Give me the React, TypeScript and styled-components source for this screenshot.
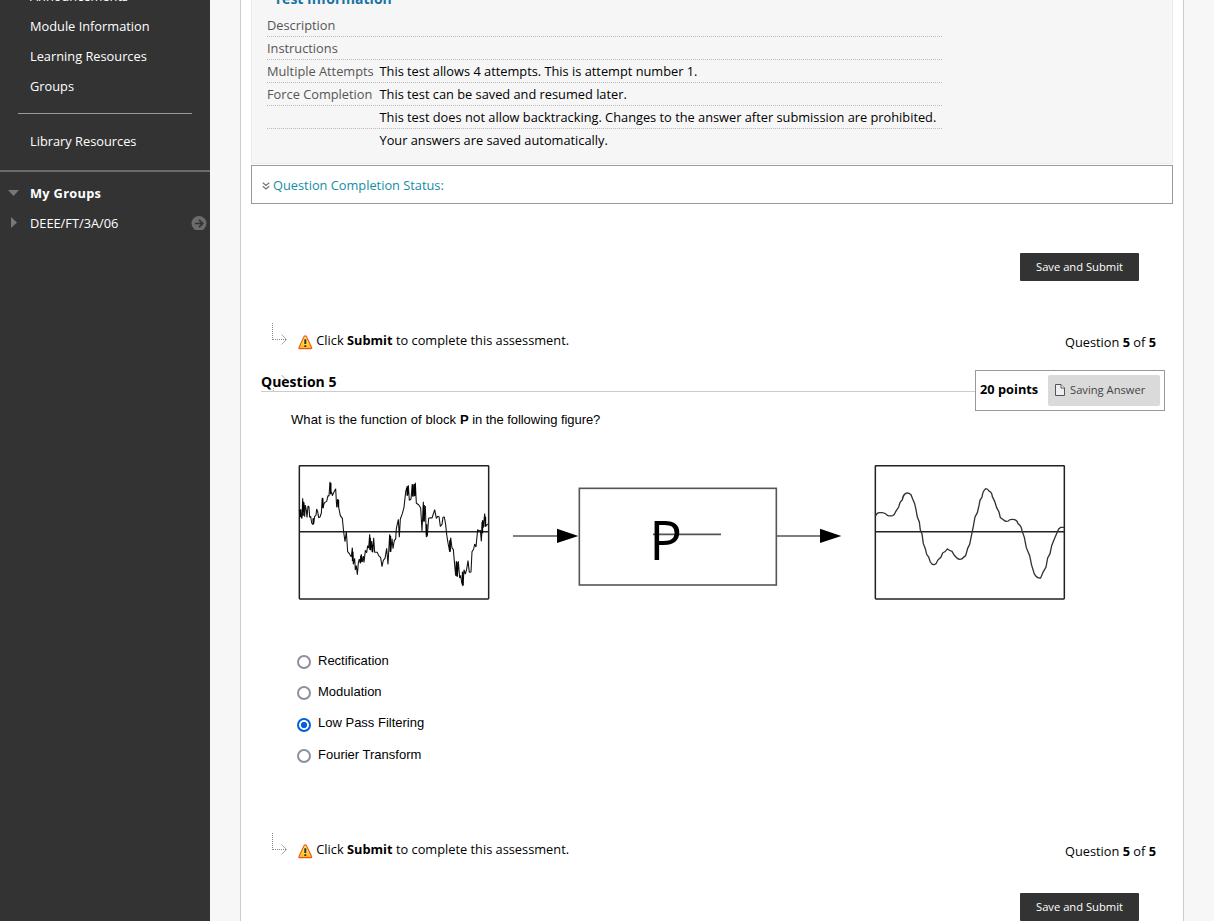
import React from "react";
import styled, { createGlobalStyle } from "styled-components";

const Global = createGlobalStyle`
  * { box-sizing: border-box; }
  html, body { margin: 0; padding: 0; background: #f7f7f7; }
  body { font-family: "Open Sans", sans-serif; font-size: 12.8px; color: #000; overflow: hidden; }
  svg { display: block; flex: none; }
`;

const Page = styled.div`
  display: flex;
  width: 1214px;
  height: 921px;
  overflow: hidden;
  background: #f7f7f7;
`;

const Sidebar = styled.nav`
  width: 210px;
  height: 100%;
  background: #333;
  color: #fff;
  overflow: hidden;
`;

const MenuItem = styled.div<{ $first?: boolean; $bold?: boolean }>`
  display: flex;
  align-items: center;
  height: 30px;
  margin-top: ${(p) => (p.$first ? "-19px" : "0")};
  padding-right: 3px;
  font-weight: ${(p) => (p.$bold ? 700 : 400)};
  letter-spacing: ${(p) => (p.$bold ? "0.3px" : "0")};
`;

const Marker = styled.span`
  display: flex;
  align-items: center;
  width: 30px;
  padding-left: 8px;
`;

const MenuLabel = styled.span`
  flex: 1;
`;

const MenuDivider = styled.hr`
  height: 1px;
  margin: 12px 18px;
  border: 0;
  background: #999;
`;

const MenuSection = styled.div`
  margin-top: 14px;
  padding-top: 6px;
  border-top: 2px solid #6b6b6b;
`;

const Content = styled.main`
  width: 944px;
  height: 100%;
  margin-left: 30px;
  padding: 0 10px;
  border: 1px solid #ccc;
  border-width: 0 1px;
  background: #fff;
  overflow: hidden;
`;

const InfoBox = styled.section`
  display: flex;
  flex-direction: column;
  height: 164px;
  padding: 0 15px;
  border: 1px solid #ebebeb;
  border-top: 0;
  border-radius: 0 0 3px 3px;
  background: #f6f6f6;
`;

const InfoTitle = styled.h3`
  height: 24px;
  margin: -10px 0 0 7px;
  font-size: 14px;
  line-height: 18px;
  color: #1874a4;
`;

const InfoRow = styled.div<{ $last?: boolean }>`
  display: flex;
  width: 675px;
  height: 23px;
  line-height: 22px;
  white-space: nowrap;
  border-bottom: ${(p) => (p.$last ? "0" : "1px dotted #bbb")};
`;

const InfoLabel = styled.span`
  width: 112.5px;
  color: #555;
`;

const StatusBox = styled.section`
  display: flex;
  align-items: center;
  gap: 3px;
  height: 39px;
  margin-top: 1px;
  padding-left: 10px;
  border: 1px solid #999;
  color: #158da3;
`;

const ButtonRow = styled.div<{ $top: number }>`
  display: flex;
  justify-content: flex-end;
  margin-top: ${(p) => p.$top}px;
  padding-right: 34px;
`;

const SubmitButton = styled.button`
  width: 119px;
  height: 28px;
  padding: 0 0 1px;
  border: 0;
  border-radius: 1px;
  background: #333;
  color: #fff;
  font: 11.2px "Open Sans", sans-serif;
`;

const Notice = styled.div<{ $top: number }>`
  display: flex;
  align-items: flex-start;
  height: 24px;
  margin-top: ${(p) => p.$top}px;
  padding: 0 17px 0 21px;
`;

const NoticeBody = styled.div<{ $top: number }>`
  display: flex;
  flex: 1;
  align-items: flex-start;
  margin-top: ${(p) => p.$top}px;
`;

const NoticeIcon = styled.span`
  margin: 4px 3.3px 0 10px;
`;

const NoticeText = styled.span`
  flex: 1;
  line-height: 18px;
`;

const Counter = styled.span`
  margin-top: 2px;
  line-height: 18px;
`;

const QuestionHead = styled.div`
  display: flex;
  height: 41px;
  margin-top: 23px;
  padding: 0 8px 0 10px;
`;

const QuestionTitle = styled.h3`
  position: relative;
  z-index: 0;
  flex: 1;
  height: 22px;
  margin: 0;
  border-bottom: 1px solid #ccc;
  font-size: 14px;
  line-height: 24px;
`;

const TitleMark = styled.svg`
  position: absolute;
  z-index: -1;
  left: 11px;
  top: 5px;
`;

const PointsBox = styled.div`
  display: flex;
  align-items: center;
  justify-content: space-between;
  width: 190px;
  height: 41px;
  padding: 0 4px;
  border: 1px solid #999;
  font-weight: 700;
`;

const Points = styled.span`
  padding-bottom: 4px;
`;

const SavingButton = styled.div`
  display: flex;
  align-items: center;
  gap: 5px;
  width: 112px;
  height: 31px;
  padding: 0 0 1px 7px;
  border-radius: 2px;
  background: #dadada;
  color: #444;
  font-size: 11.2px;
  font-weight: 400;
`;

const SavingLabel = styled.span`
  padding-bottom: 1px;
`;

const Prompt = styled.p`
  height: 18px;
  margin: 0 0 0 40px;
  font: 13px/18px "Liberation Sans", sans-serif;
`;

const PromptPart = styled.span<{ $tracking: number }>`
  letter-spacing: ${(p) => p.$tracking}px;
`;

const Figure = styled.figure`
  height: 155px;
  margin: 26px 0 0 39px;
`;

const Options = styled.div`
  display: flex;
  flex-direction: column;
  margin: 36px 0 0 46px;
`;

const Option = styled.label<{ $selected: boolean }>`
  display: flex;
  align-items: flex-start;
  gap: 7px;
  height: 31.33px;
  font: 13px "Liberation Sans", sans-serif;
  line-height: ${(p) => (p.$selected ? "28px" : "29px")};
`;

const Radio = styled.input`
  appearance: none;
  width: 14px;
  height: 14px;
  margin: 9px 0 0;
  border: 2px solid #8f8f9d;
  border-radius: 50%;
  background: #fff;
  &:checked {
    border-color: #0060df;
    background: radial-gradient(circle, #0060df 0 2.8px, #fff 3.4px);
  }
`;

function Warning() {
  return (
    <svg width="15" height="15" viewBox="0 0 15 15">
      <defs>
        <linearGradient id="warn" x1="0" y1="0" x2="0" y2="1">
          <stop offset="0" stopColor="#ffe97a" />
          <stop offset=".6" stopColor="#ffd83a" />
          <stop offset="1" stopColor="#fdb51c" />
        </linearGradient>
      </defs>
      <path d="M6.2 1.3Q7.3.3 8.3 1.3L13.6 12.4Q14.1 13.6 12.9 13.6H1.6Q.4 13.6 1 12.4Z" fill="url(#warn)" stroke="#f4511e" strokeWidth="1.1" />
      <path d="M7.3 4.3V9M7.3 10.2V12" stroke="#333" strokeWidth="2" />
    </svg>
  );
}

function Branch() {
  return (
    <svg width="16" height="24" viewBox="0 0 16 24" fill="none" stroke="#888">
      <path d="M.5 0V17" strokeDasharray="1 1" />
      <path d="M1 16.5H14" strokeDasharray="1 1" />
      <path d="M9.5 11.5L14.5 16.5L9.5 21.5" stroke="#aaa" />
    </svg>
  );
}

function SubmitNotice({ top, bodyTop }: { top: number; bodyTop: number }) {
  return (
    <Notice $top={top}>
      <Branch />
      <NoticeBody $top={bodyTop}>
        <NoticeIcon>
          <Warning />
        </NoticeIcon>
        <NoticeText>
          Click <b>Submit</b> to complete this assessment.
        </NoticeText>
        <Counter>
          Question <b>5</b> of <b>5</b>
        </Counter>
      </NoticeBody>
    </Notice>
  );
}

const NOISY =
  "28,165 30,185 32,168 34,188 36,190 38,130 40,170 42,142 44,185 46,150 49,166 51,187 54,153 57,156 59,187 62,184 65,204 68,208 71,204 74,184 78,181 80,162 83,170 86,188 90,186 94,174 97,128 99,160 102,146 105,142 110,139 114,122 117,123 120,80 122,112 125,112 127,122 132,111 137,101 140,157 143,132 146,157 151,182 157,190 161,231 165,260 169,230 173,290 178,296 184,306 187,278 190,328 194,310 196,345 199,332 202,359 205,324 208,312 211,325 214,298 217,321 220,303 222,322 226,286 230,293 233,272 236,279 239,238 242,286 245,258 248,292 251,248 254,292 262,292 266,302 272,308 276,335 280,316 285,310 290,280 294,328 299,238 302,291 306,251 309,281 313,256 317,252 319,221 325,193 328,247 331,192 337,176 342,157 347,111 350,99 353,119 355,91 358,136 363,132 367,87 369,125 372,87 374,124 376,83 379,145 386,149 392,159 396,228 400,140 402,197 406,153 409,246 412,242 416,190 421,188 426,189 431,174 434,164 439,190 443,184 447,185 451,214 456,208 459,187 463,186 467,209 470,238 474,264 479,290 482,248 486,279 490,283 493,319 497,362 499,318 502,365 505,319 509,369 512,361 515,382 519,393 522,344 526,357 530,343 534,317 538,352 543,351 546,290 551,282 554,267 558,276 563,224 567,230 571,225 574,259 578,195 580,218 584,176 587,213 593,207";

const PEAKS =
  "M32 163V186M39 140V182M70 190V208M98 130V158M122 84V118M145 134V157M188 290V318M213 302V322M240 248V284M247 270V290M301 242V290M352 94V122M368 90V124M375 88V122M402 150V200M410 208V240M480 256V290M501 322V364M518 350V390M577 200V235M586 185V215";

const SMOOTH =
  "M32 182Q36 173 43 173H52Q62 174 67 181Q74 184 83 182Q88 180 92 170L101 156L105 143L112 134Q113 121 122 115Q130 112 138 119L143 132L149 146L153 164L157 186L163 201L166 225L171 237L175 266L181 281L185 298L191 306L196 321Q201 330 208 329Q215 326 218 316L228 306L233 294Q242 290 247 282Q252 286 261 289L268 301L275 308Q282 315 290 312Q295 307 302 302L308 280L314 268L320 238L325 214L330 186L337 173L342 152L345 136L351 126Q353 108 362 101Q368 101 373 109Q381 112 382 125L389 139L395 158L402 171L406 188L415 194Q422 201 430 198Q434 191 449 194Q457 197 459 206Q469 212 471 227L478 247L484 278L494 302L500 331L508 357L514 365Q521 370 527 369L534 352L543 336L548 309L555 296L560 272L568 252L577 231Q580 220 587 217H598";

function SignalDiagram() {
  return (
    <svg width="785" height="155" viewBox="0 0 785 155" fill="none" stroke="#222">
      <g transform="scale(.33333)" strokeWidth="4.5">
        <rect x="28" y="32" width="568" height="400" rx="2" />
        <path d="M28 230.5H596" />
        <polyline points={NOISY} stroke="#111" strokeWidth="3.2" strokeLinejoin="bevel" />
        <path d={PEAKS} stroke="#000" strokeWidth="5" />
      </g>
      <g transform="translate(210 0) scale(.33333)" strokeWidth="4.8" stroke="#555">
        <rect x="238" y="100" width="591" height="290" />
        <path d="M39 243H175M829 243H965M459 238H663" />
        <path d="M171 221L235 243L171 264ZM960 221L1024 243L960 264Z" fill="#000" stroke="none" />
      </g>
      <text x="359.2" y="105" fill="#000" stroke="none" fontFamily="Open Sans" fontSize="54.6">
        P
      </text>
      <g transform="translate(575 0) scale(.33333)" strokeWidth="4.5">
        <rect x="31" y="32" width="567" height="400" rx="2" />
        <path d="M31 230.5H598" />
        <path d={SMOOTH} strokeWidth="4" stroke="#333" />
      </g>
    </svg>
  );
}

const INFO: [string, string][] = [
  ["Description", ""],
  ["Instructions", ""],
  ["Multiple Attempts", "This test allows 4 attempts. This is attempt number 1."],
  ["Force Completion", "This test can be saved and resumed later."],
  ["", "This test does not allow backtracking. Changes to the answer after submission are prohibited."],
  ["", "Your answers are saved automatically."],
];

const ANSWERS = ["Rectification", "Modulation", "Low Pass Filtering", "Fourier Transform"];
const SELECTED = "Low Pass Filtering";

export default function App() {
  return (
    <Page>
      <Global />
      <Sidebar>
        {["Announcements", "Module Information", "Learning Resources", "Groups"].map((label, i) => (
          <MenuItem key={label} $first={i === 0}>
            <Marker />
            <MenuLabel>{label}</MenuLabel>
          </MenuItem>
        ))}
        <MenuDivider />
        <MenuItem>
          <Marker />
          <MenuLabel>Library Resources</MenuLabel>
        </MenuItem>
        <MenuSection>
          <MenuItem $bold>
            <Marker>
              <svg width="11" height="6" viewBox="0 0 11 6">
                <path d="M0 0H11L5.5 6Z" fill="#777" />
              </svg>
            </Marker>
            <MenuLabel>My Groups</MenuLabel>
          </MenuItem>
          <MenuItem>
            <Marker>
              <svg width="9" height="12" viewBox="0 0 9 12">
                <path d="M3 0L9 5.5L3 11Z" fill="#777" />
              </svg>
            </Marker>
            <MenuLabel>DEEE/FT/3A/06</MenuLabel>
            <svg width="16" height="14" viewBox="0 0 16 14">
              <circle cx="8" cy="7.5" r="7.5" fill="#6b6b6b" />
              <path d="M4 7.5H11.5M8 3.8L11.7 7.5L8 11.2" fill="none" stroke="#333" strokeWidth="1.7" />
            </svg>
          </MenuItem>
        </MenuSection>
      </Sidebar>
      <Content>
        <InfoBox>
          <InfoTitle>Test Information</InfoTitle>
          {INFO.map(([label, value], i) => (
            <InfoRow key={i} $last={i === INFO.length - 1}>
              <InfoLabel>{label}</InfoLabel>
              <span>{value}</span>
            </InfoRow>
          ))}
        </InfoBox>
        <StatusBox>
          <svg width="8" height="10" viewBox="0 0 8 10" fill="none" stroke="#777" strokeWidth="1.2">
            <path d="M.8 2.7L4 5.5L7.2 2.7M.8 6.2L4 9L7.2 6.2" />
          </svg>
          <span>Question Completion Status:</span>
        </StatusBox>
        <ButtonRow $top={49}>
          <SubmitButton>Save and Submit</SubmitButton>
        </ButtonRow>
        <SubmitNotice top={42} bodyTop={8} />
        <QuestionHead>
          <QuestionTitle>
            <TitleMark width="16" height="18" viewBox="0 0 16 18" fill="none" stroke="#aaa">
              <path d="M9.5 0L14.5 5" />
              <path d="M1.5 13V17" strokeDasharray="1 1" />
            </TitleMark>
            Question 5
          </QuestionTitle>
          <PointsBox>
            <Points>20 points</Points>
            <SavingButton>
              <svg width="10" height="12" viewBox="0 0 10 12">
                <path d="M.5 .5H6L9.5 4V11.5H.5Z" fill="#eee" stroke="#555" />
                <path d="M6 .5V4H9.5" fill="#fff" stroke="#555" />
              </svg>
              <SavingLabel>Saving Answer</SavingLabel>
            </SavingButton>
          </PointsBox>
        </QuestionHead>
        <Prompt>
          <PromptPart $tracking={0.09}>What is the function of block </PromptPart>
          <b>P</b>
          <PromptPart $tracking={-0.05}> in the following figure?</PromptPart>
        </Prompt>
        <Figure>
          <SignalDiagram />
        </Figure>
        <Options>
          {ANSWERS.map((answer) => (
            <Option key={answer} $selected={answer === SELECTED}>
              <Radio type="radio" name="answer" defaultChecked={answer === SELECTED} />
              {answer}
            </Option>
          ))}
        </Options>
        <SubmitNotice top={62} bodyTop={7} />
        <ButtonRow $top={36}>
          <SubmitButton>Save and Submit</SubmitButton>
        </ButtonRow>
      </Content>
    </Page>
  );
}
